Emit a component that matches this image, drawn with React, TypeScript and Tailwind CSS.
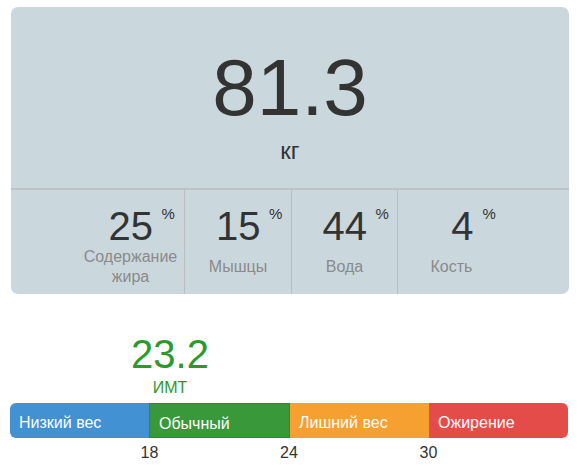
import React from 'react';

type Stat = {
  value: string;
  label: string[];
};

const stats: Stat[] = [
  { value: '25', label: ['Содержание', 'жира'] },
  { value: '15', label: ['Мышцы'] },
  { value: '44', label: ['Вода'] },
  { value: '4', label: ['Кость'] },
];

const ranges = [
  { name: 'Низкий вес', bg: 'bg-[#4291d2]', edge: 'rounded-l-[6px]', tick: '18' },
  { name: 'Обычный', bg: 'bg-[#399839] border border-[#2f8a2f]', edge: '', tick: '24' },
  { name: 'Лишний вес', bg: 'bg-[#f6a031]', edge: '', tick: '30' },
  { name: 'Ожирение', bg: 'bg-[#e44c4a]', edge: 'rounded-r-[6px]', tick: '' },
];

function StatCell({ stat }: { stat: Stat }): React.JSX.Element {
  return (
    <div className="w-[107px] flex flex-col items-center pt-[16px]">
      {/* number is right-aligned in a fixed box so one-digit values sit like two-digit ones */}
      <div className="relative w-[44px] text-right text-[40px] leading-[40px] text-[#333]">
        {stat.value}
        <span className="absolute left-[calc(100%+9px)] top-0 text-[15px] leading-[15px]">%</span>
      </div>
      <div className="h-[42px] flex flex-col items-center justify-center text-[16px] leading-[20px] text-[#8a8a8a]">
        {stat.label.map((line) => (
          <span key={line}>{line}</span>
        ))}
      </div>
    </div>
  );
}

export default function App(): React.JSX.Element {
  return (
    <div className="w-[580px] h-[469px] bg-white font-['Liberation_Sans',Arial,sans-serif] overflow-hidden">
      {/* Weight card */}
      <div className="ml-[11px] mt-[7px] w-[558px] h-[287px] rounded-[7px] bg-[#cad8de] flex flex-col overflow-hidden">
        <div className="h-[181px] flex flex-col items-center pt-[41px] text-[#333]">
          <div className="text-[80px] leading-[80px]">81.3</div>
          <div className="mt-[11px] text-[24px] leading-[24px]">кг</div>
        </div>
        <div className="flex-1 flex border-t-2 border-[#bdc3c6]">
          <div className="w-[173px] flex justify-end">
            <StatCell stat={stats[0]} />
          </div>
          <div className="w-[107px] flex justify-center border-l border-[#b8bec1]">
            <StatCell stat={stats[1]} />
          </div>
          <div className="w-[106px] flex justify-center border-l border-[#b8bec1]">
            <StatCell stat={stats[2]} />
          </div>
          <div className="flex-1 flex justify-start border-l border-[#b8bec1]">
            <StatCell stat={stats[3]} />
          </div>
        </div>
      </div>

      {/* BMI scale */}
      <div className="ml-[10px] w-[558px] mt-[40px]">
        <div className="ml-[100px] w-[120px] flex flex-col items-center text-[#2b9a2b]">
          <div className="text-[40px] leading-[40px]">23.2</div>
          <div className="mt-[6px] text-[16px] leading-[16px]">ИМТ</div>
        </div>
        <div className="mt-[7px] flex h-[35px]">
          {ranges.map((r) => (
            <div
              key={r.name}
              className={`flex-1 pl-[9px] pt-[12px] text-[16px] leading-[16px] text-white ${r.bg} ${r.edge}`}
            >
              {r.name}
            </div>
          ))}
        </div>
        <div className="mt-[7px] flex text-[16px] leading-[16px] text-[#333]">
          {ranges.map((r) => (
            <div key={r.name} className="flex-1 flex justify-end">
              <span className="translate-x-1/2">{r.tick}</span>
            </div>
          ))}
        </div>
      </div>
    </div>
  );
}
